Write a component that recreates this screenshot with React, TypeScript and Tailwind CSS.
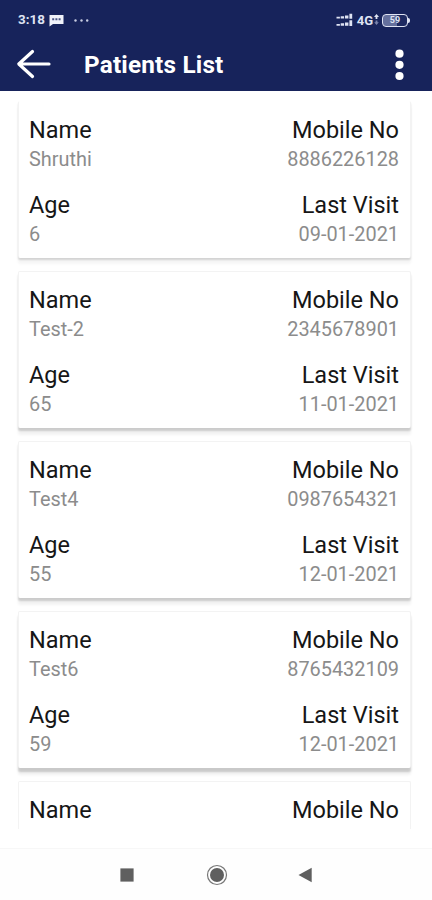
import React from "react";

interface Patient {
  name: string;
  mobile: string;
  age: string;
  lastVisit: string;
  shadow: string;
}

const softShadow = "border-t-transparent shadow-[0_2px_2px_rgba(0,0,0,0.14),0_6px_3px_rgba(0,0,0,0.04)]";
const mediumShadow = "border-t-[#f3f3f3] shadow-[0_3px_2px_rgba(0,0,0,0.16),0_7px_3px_rgba(0,0,0,0.05)]";
const deepShadow = "border-t-[#f3f3f3] shadow-[0_4px_2px_rgba(0,0,0,0.16),0_7px_3px_rgba(0,0,0,0.06)]";

const patients: Patient[] = [
  { name: "Shruthi", mobile: "8886226128", age: "6", lastVisit: "09-01-2021", shadow: softShadow },
  { name: "Test-2", mobile: "2345678901", age: "65", lastVisit: "11-01-2021", shadow: mediumShadow },
  { name: "Test4", mobile: "0987654321", age: "55", lastVisit: "12-01-2021", shadow: mediumShadow },
  { name: "Test6", mobile: "8765432109", age: "59", lastVisit: "12-01-2021", shadow: deepShadow },
];

function Field({ label, value, right = false }: { label: string; value?: string; right?: boolean }) {
  return (
    <div className={right ? "text-right" : ""}>
      <div className="h-[29px] text-[23.5px] leading-[29px] text-[#161616]">{label}</div>
      {value && <div className="h-[30px] text-[19.9px] leading-[30px] text-[#8c8c8c]">{value}</div>}
    </div>
  );
}

function PatientCard({ patient }: { patient: Patient }) {
  return (
    <div className="h-[170.1px] shrink-0">
      <div className={`h-[156.5px] rounded-[2px] border border-x-[#f3f3f3] border-b-transparent bg-white px-[10.5px] pt-[14px] ${patient.shadow}`}>
        <div className="flex h-[75px] justify-between">
          <Field label="Name" value={patient.name} />
          <Field label="Mobile No" value={patient.mobile} right />
        </div>
        <div className="flex justify-between">
          <Field label="Age" value={patient.age} />
          <Field label="Last Visit" value={patient.lastVisit} right />
        </div>
      </div>
    </div>
  );
}

function StatusBar() {
  return (
    <div className="flex h-10 items-center justify-between pl-[18px] pr-[22px] text-[#dfe3f3]">
      <div className="flex items-center">
        <span className="w-[31px] text-[13.4px] font-bold leading-none">3:18</span>
        <svg className="h-[13px] w-[15px]" viewBox="0 0 15 13">
          <path d="M.5 1h14v9H4L.5 12.5z" fill="#f0f2fa" />
          <path d="M3.2 4.3h2v2h-2zm3.2 0h2v2h-2zm3.2 0h2v2h-2z" fill="#4b5585" />
        </svg>
        <svg className="ml-[10px] h-[3px] w-[15px]" viewBox="0 0 15 3" fill="#c9cee3">
          <circle cx="1.5" cy="1.5" r="1.2" />
          <circle cx="7.5" cy="1.5" r="1.2" />
          <circle cx="13.2" cy="1.5" r="1.2" />
        </svg>
      </div>
      <div className="flex items-center">
        <svg className="h-[14px] w-[18px]" viewBox="0 0 18 14" fill="#dfe3f3">
          <path d="M.5 3.8h3.4V5.4H.5zM4.7 3.2h3.4v2.2H4.7zM9 2.4h3.4v3H9zM13.4.8h2.8v5h-2.8zM.5 11h3.4v1.8H.5zM4.7 10.3h3.4v2.5H4.7zM9 9.6h3.4v3.2H9zM13.4 7.2h2.8v5.8h-2.8z" />
        </svg>
        <span className="ml-[3px] text-[13px] font-bold leading-none">4G</span>
        <svg className="ml-[1px] h-[12px] w-[5px]" viewBox="0 0 5 12">
          <path d="M2.5 0L5 3H3.4v2H1.6V3H0z" fill="#dfe3f3" />
          <path d="M2.5 11L.2 8.3h1.4V6.5h1.8v1.8h1.4z" fill="#7a83ac" />
        </svg>
        <div className="ml-[3px] flex h-[13px] w-[26px] items-center justify-center rounded-[4px] border-[1.5px] border-[#dfe3f3] bg-[linear-gradient(90deg,#65709d_58%,#1d2961_58%)] text-[9px] font-bold leading-none">
          59
        </div>
        <div className="h-[5px] w-[2px] rounded-r-sm bg-[#dfe3f3]" />
      </div>
    </div>
  );
}

function AppBar() {
  return (
    <div className="flex h-[51px] items-center pb-[2px] pl-[16px] pr-[28px] text-white">
      <svg className="h-[32px] w-[36px] shrink-0" viewBox="0 0 36 32" fill="none" stroke="currentColor" strokeWidth="3.2" strokeLinecap="round" strokeLinejoin="round">
        <path d="M33 15H3M16.5 2.5L2.8 15L16.5 27.5" />
      </svg>
      <h1 className="ml-[32px] mt-px text-[24.3px] font-bold leading-none tracking-[0.2px]">Patients List</h1>
      <svg className="ml-auto h-[32px] w-[9px]" viewBox="0 0 9 32" fill="currentColor">
        <circle cx="4.5" cy="4.7" r="4.1" />
        <circle cx="4.5" cy="15.8" r="4.1" />
        <circle cx="4.5" cy="27" r="4.1" />
      </svg>
    </div>
  );
}

function NavigationBar() {
  return (
    <div className="flex h-[52px] items-center border-t border-[#f7f7f7] bg-[#fefefe] pl-[120px]">
      <svg className="h-[14px] w-[14px]" viewBox="0 0 14 14">
        <rect x=".4" y=".4" width="13.2" height="13.2" fill="#5f5f5f" />
      </svg>
      <svg className="ml-[72px] h-[22px] w-[22px]" viewBox="0 0 22 22">
        <circle cx="11" cy="11" r="9.5" fill="none" stroke="#777777" strokeWidth="1.2" />
        <circle cx="11" cy="11" r="7" fill="#5f5f5f" />
      </svg>
      <svg className="ml-[70px] h-[16px] w-[14px]" viewBox="0 0 14 16">
        <path d="M13.7.8v14.4L.5 8z" fill="#5f5f5f" />
      </svg>
    </div>
  );
}

export default function App() {
  return (
    <div className="flex h-[900px] w-[432px] flex-col overflow-hidden bg-white font-['Roboto',sans-serif]">
      <header className="h-[91px] shrink-0 bg-[#17235b]">
        <StatusBar />
        <AppBar />
      </header>
      <main className="h-[738px] shrink-0 overflow-hidden pl-[17.5px] pr-[21.5px] pt-[10px]">
        {patients.map((patient) => (
          <PatientCard key={patient.mobile} patient={patient} />
        ))}
        <div className="flex h-[50px] justify-between rounded-t-[2px] border border-b-0 border-[#f3f3f3] bg-white px-[10.5px] pt-[14px]">
          <Field label="Name" />
          <Field label="Mobile No" right />
        </div>
      </main>
      <div className="grow" />
      <NavigationBar />
    </div>
  );
}
